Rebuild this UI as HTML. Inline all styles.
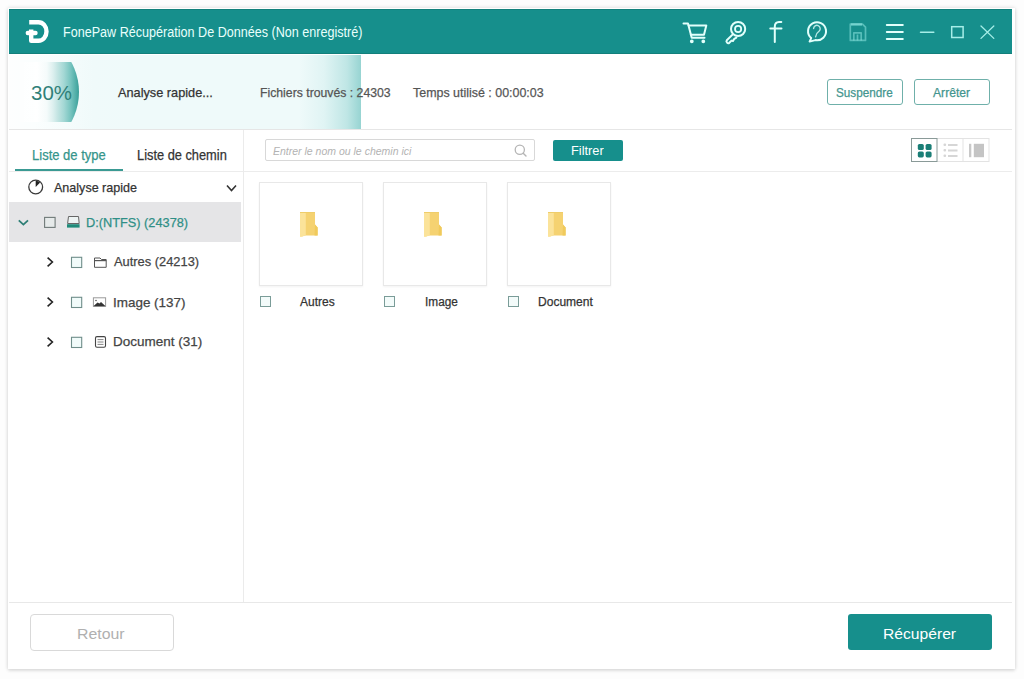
<!DOCTYPE html>
<html><head><meta charset="utf-8">
<style>
*{margin:0;padding:0;box-sizing:border-box}
html,body{width:1024px;height:679px;overflow:hidden;background:#fdfdfd;font-family:"Liberation Sans",sans-serif}
.a{position:absolute}
.t{position:absolute;white-space:pre;line-height:1;transform-origin:0 0;-webkit-text-stroke:0.25px currentColor}
#win{left:8px;top:8px;width:1007px;height:661px;background:#fff;box-shadow:0 0 4px rgba(0,0,0,.15),0 2px 3px rgba(0,0,0,.08)}
#title{left:9px;top:9px;width:1003px;height:45px;background:#168f8c;border-top:1px solid #12817c;border-bottom:1px solid #137f7b}
</style></head><body>
<div class="a" id="win"></div>
<div class="a" id="title"></div>
<div class="t" style="left:63.10px;top:25.30px;font-size:14.0px;color:#e9fffc;transform:scaleX(0.8991);-webkit-text-stroke:0">FonePaw Récupération De Données (Non enregistré)</div>


<!-- logo -->
<svg class="a" style="left:24px;top:19px" width="26" height="25" viewBox="0 0 26 25">
<path d="M5.2,3.2 H14.5 A8,9.3 0 0 1 14.5,21.8 H7.2 V10.5" fill="none" stroke="#fff" stroke-width="4.4" stroke-linejoin="round"/>
<path d="M3.8,14 H11.5" fill="none" stroke="#fff" stroke-width="4.4" stroke-linecap="round"/>
</svg>
<!-- title icons -->
<svg class="a" style="left:0;top:0" width="1024" height="60" viewBox="0 0 1024 60">
<g fill="none" stroke="#e2fffb" stroke-width="2" stroke-linecap="round" stroke-linejoin="round">
<path d="M683.5,23.6 H688 L691.7,37.7 H704.5"/>
<path d="M688.6,25.6 H706.3 L704,34.8 H690.8"/>
<circle cx="691.8" cy="41.3" r="0.9" fill="#e2fffb"/>
<circle cx="703.3" cy="41.3" r="0.9" fill="#e2fffb"/>
<circle cx="738.1" cy="29" r="7.1"/>
<circle cx="738.1" cy="29" r="3.1" stroke-width="1.8"/>
<path d="M732.5,34.6 L726.8,40.3 A1.8,1.8 0 0 0 729.3,42.8 L731.5,40.6 L733,41 L734.3,38.8 L736.4,37.6"/>
<path d="M774.8,42 V26.5 Q774.8,22 779,21.9 L781.3,22"/>
<path d="M770.3,28.6 H781.5"/>
<path d="M811.2,38.1 A9,9 0 1 1 815.4,40.1 L809.6,41.6 Z"/>
<path d="M813.6,28.6 A3.3,3.3 0 1 1 819.2,31 Q816.3,33 815.6,36.8" stroke-width="1.4" stroke-opacity="0.8"/>
<path d="M886.8,25 H902.8 M886.8,32 H902.8 M886.8,39.1 H902.8"/>
<path d="M920.5,32.3 H933.8" stroke-width="1.5" stroke="#a6eee8"/>
<rect x="951.7" y="26.7" width="11.4" height="10.8" stroke-width="1.5" stroke="#a6eee8" stroke-linejoin="miter"/>
<path d="M981,26 L993.8,38.4 M993.8,26 L981,38.4" stroke-width="1.3" stroke="#a6eee8"/>
</g>
<g fill="none" stroke="#8ee6e0" stroke-opacity="0.55" stroke-width="1.7" stroke-linejoin="round">
<path d="M850.3,24.1 H862.5 L865.5,27.1 V40.4 H850.3 Z"/>
<path d="M853.8,40.4 V32.8 H861.2 V40.4 M857.5,34.5 V40.4"/>
<path d="M851,24.5 H862" stroke-width="2.6"/>
</g>
</svg>

<!-- progress header -->
<div class="a" style="left:9px;top:55px;width:352px;height:74px;background:linear-gradient(90deg,#fdfefe 0,#fbfefe 25px,#f0fafa 85px,#effafa 120px,#effafa 290px,#e0f4f4 315px,#bfe6e5 338px,#97d4d2 352px)"></div>
<div class="a" style="left:9px;top:129px;width:1003px;height:1px;background:#e6e6e6"></div>

<div class="a" style="left:20px;top:62px;width:60px;height:60px;overflow:hidden">
<div class="a" style="left:-65px;top:-32px;width:124px;height:124px;border-radius:50%;background:linear-gradient(90deg,rgba(255,255,255,0) 45%,#fff 66%,#f5fbfb 74%,#ddf0ef 79%,#c2e4e2 83%,#a2d7d4 88%,#75c3be 93.5%,#4caba5 98%,#3a9e98 100%)"></div>
</div>
<div class="t" style="left:30.62px;top:81.55px;font-size:21.0px;color:#2f8078;transform:scaleX(0.9750);-webkit-text-stroke:0">30%</div>
<div class="t" style="left:118.00px;top:85.85px;font-size:13.0px;color:#333;transform:scaleX(0.9792)">Analyse rapide...</div>
<div class="t" style="left:260.06px;top:85.85px;font-size:13.0px;color:#555;transform:scaleX(0.9416)">Fichiers trouvés : 24303</div>
<div class="t" style="left:413.30px;top:85.85px;font-size:13.0px;color:#555;transform:scaleX(0.9566)">Temps utilisé : 00:00:03</div>
<div class="a" style="left:827px;top:79px;width:76px;height:26px;border:1px solid #6fb0aa;border-radius:3px"></div>
<div class="t" style="left:835.76px;top:86.58px;font-size:12.5px;color:#43958e;transform:scaleX(0.9373)">Suspendre</div>
<div class="a" style="left:914px;top:79px;width:76px;height:26px;border:1px solid #6fb0aa;border-radius:3px"></div>
<div class="t" style="left:933.40px;top:86.58px;font-size:12.5px;color:#43958e;transform:scaleX(0.9711)">Arrêter</div>

<!-- sidebar -->
<div class="a" style="left:243px;top:130px;width:1px;height:473px;background:#ebebeb"></div>
<div class="a" style="left:9px;top:171px;width:234px;height:1px;background:#ececec"></div>
<div class="t" style="left:31.57px;top:147.70px;font-size:14.0px;color:#35958b;transform:scaleX(0.9295)">Liste de type</div>
<div class="t" style="left:136.98px;top:147.70px;font-size:14.0px;color:#333;transform:scaleX(0.9156)">Liste de chemin</div>
<div class="a" style="left:15px;top:169px;width:108px;height:2px;background:#3a9a93"></div>
<div class="t" style="left:54.00px;top:180.53px;font-size:13.5px;color:#333;transform:scaleX(0.9292)">Analyse rapide</div>
<div class="a" style="left:9px;top:202px;width:232px;height:40px;background:#e5e5e7"></div>
<div class="t" style="left:85.85px;top:215.83px;font-size:13.5px;color:#2f8f86;transform:scaleX(0.9453)">D:(NTFS) (24378)</div>
<div class="t" style="left:114.00px;top:255.33px;font-size:13.5px;color:#444;transform:scaleX(0.9528)">Autres (24213)</div>
<div class="t" style="left:112.60px;top:295.52px;font-size:13.5px;color:#444;transform:scaleX(0.9958)">Image (137)</div>
<div class="t" style="left:112.60px;top:335.42px;font-size:13.5px;color:#444;transform:scaleX(0.9989)">Document (31)</div>


<svg class="a" style="left:0;top:170px" width="244" height="190" viewBox="0 170 244 190">
<circle cx="35.7" cy="187" r="6.9" fill="none" stroke="#3a3a3a" stroke-width="1.3"/>
<path d="M35.7,187 V180.8 A6.2,6.2 0 0 1 40.1,182.6 Z" fill="#222"/>
<path d="M227,185.5 L231.5,190.5 L236,185.5" fill="none" stroke="#333" stroke-width="1.6"/>
<path d="M18.8,220.3 L23.4,224.6 L28,220.3" fill="none" stroke="#2d7e75" stroke-width="1.8"/>
<rect x="44.6" y="217.4" width="10.5" height="10" fill="#e6eaea" stroke="#707a79" stroke-width="1.1"/>
<path d="M68.5,216.5 H78.5 L79.2,223.5 H67.6 Z" fill="#edf3f3" stroke="#666" stroke-width="1"/>
<rect x="67" y="224.2" width="12.6" height="3.4" fill="#1f8b7a"/>
<g fill="none" stroke="#222" stroke-width="1.6">
<path d="M47.6,257.6 L52.4,262 L47.6,266.4"/>
<path d="M47.6,297.6 L52.4,302 L47.6,306.4"/>
<path d="M47.6,337.6 L52.4,342 L47.6,346.4"/>
</g>
<g fill="#f1fbfa" stroke="#6f8e8a" stroke-width="1.1">
<rect x="71.5" y="257.3" width="10.2" height="10.2"/>
<rect x="71.5" y="297.3" width="10.2" height="10.2"/>
<rect x="71.5" y="337.3" width="10.2" height="10.2"/>
</g>
<path d="M94.5,258 H100 L101.5,259.5 H106.2 V267.3 H94.5 Z" fill="none" stroke="#555" stroke-width="1"/>
<path d="M94.5,260.6 H106.2" stroke="#555" stroke-width="1.2"/>
<rect x="93.4" y="297.8" width="12.2" height="8.5" fill="none" stroke="#999" stroke-width="1"/>
<path d="M93.4,306.3 L97.5,302.5 L99.5,303.5 L101,302 L105.6,306.3 Z" fill="#333"/>
<circle cx="96" cy="300.5" r="0.8" fill="#555"/>
<rect x="95.5" y="336.6" width="10" height="10.6" rx="1.5" fill="none" stroke="#444" stroke-width="1.1"/>
<path d="M97.5,339.6 H103.5 M97.5,342 H103.5 M97.5,344.4 H103.5" stroke="#777" stroke-width="0.9"/>
</svg>

<!-- toolbar -->
<div class="a" style="left:244px;top:171px;width:768px;height:1px;background:#ececec"></div>
<div class="a" style="left:265px;top:139px;width:270px;height:22px;border:1px solid #d8d8d8;border-radius:2px"></div>
<div class="t" style="left:273.00px;top:145.57px;font-size:10.5px;color:#b3b3b3;transform:scaleX(1.0000);font-style:italic;-webkit-text-stroke:0">Entrer le nom ou le chemin ici</div>
<div class="a" style="left:553px;top:140px;width:70px;height:21px;background:#168f8c;border-radius:2px"></div>
<div class="t" style="left:570.97px;top:144.78px;font-size:12.5px;color:#fff;transform:scaleX(1.0258);-webkit-text-stroke:0">Filtrer</div>


<svg class="a" style="left:500px;top:135px" width="512" height="180" viewBox="500 135 512 180">
<circle cx="519.8" cy="149.8" r="4.6" fill="none" stroke="#b5b5b5" stroke-width="1.3"/>
<path d="M523.2,153.2 L526,156" stroke="#b5b5b5" stroke-width="1.4" stroke-linecap="round"/>
<rect x="911.5" y="138.5" width="77.5" height="23" fill="#fff" stroke="#e3e3e3" stroke-width="1"/>
<path d="M963,138.5 V161.5" stroke="#e3e3e3" stroke-width="1"/>
<rect x="911.5" y="138.5" width="25.5" height="23" fill="#fff" stroke="#8a9a98" stroke-width="1"/>
<g fill="#1a7e76">
<rect x="917.8" y="144" width="6" height="6" rx="1.6"/>
<rect x="925.6" y="144" width="6" height="6" rx="1.6"/>
<rect x="917.8" y="151.4" width="6" height="6" rx="1.6"/>
<rect x="925.6" y="151.4" width="6" height="6" rx="1.6"/>
</g>
<g fill="#d6d6d6">
<rect x="943.5" y="143.5" width="2.6" height="2.6" rx="1"/>
<rect x="943.5" y="149" width="2.6" height="2.6" rx="1"/>
<rect x="943.5" y="154.5" width="2.6" height="2.6" rx="1"/>
<rect x="948" y="144" width="9.5" height="2"/>
<rect x="948" y="149.5" width="9.5" height="2"/>
<rect x="948" y="155" width="9.5" height="2"/>
<rect x="969" y="143.8" width="2.3" height="13.4" fill="#c8c8c8"/>
<rect x="973.8" y="143.8" width="10.2" height="13.4" fill="#c4c4c4"/>
</g>
</svg>

<!-- cards -->
<div class="a" style="left:259px;top:182px;width:104px;height:104px;border:1px solid #e8e8e8;box-shadow:0 1px 2px rgba(0,0,0,.05)"></div>
<svg class="a" style="left:299px;top:211px" width="20" height="27" viewBox="0 0 20 27">
<path d="M1,1 H16 V13.5 L18.6,16.5 V24.6 H6 L3,25.6 H1 Z" fill="#f5d271"/>
<path d="M1,1 H6.8 V24.6 L3,25.6 H1 Z" fill="#fbe39a"/>
<path d="M16,13.5 L18.6,16.5 V24.6 H15.5 Z" fill="#f0ca5c"/>
<path d="M1,1 H16 V2 H1 Z" fill="#efcd6a"/>
</svg>
<div class="a" style="left:260px;top:296px;width:11px;height:11px;border:1px solid #7a9c98;background:#f3fbfa"></div>
<div class="a" style="left:383px;top:182px;width:104px;height:104px;border:1px solid #e8e8e8;box-shadow:0 1px 2px rgba(0,0,0,.05)"></div>
<svg class="a" style="left:423px;top:211px" width="20" height="27" viewBox="0 0 20 27">
<path d="M1,1 H16 V13.5 L18.6,16.5 V24.6 H6 L3,25.6 H1 Z" fill="#f5d271"/>
<path d="M1,1 H6.8 V24.6 L3,25.6 H1 Z" fill="#fbe39a"/>
<path d="M16,13.5 L18.6,16.5 V24.6 H15.5 Z" fill="#f0ca5c"/>
<path d="M1,1 H16 V2 H1 Z" fill="#efcd6a"/>
</svg>
<div class="a" style="left:384px;top:296px;width:11px;height:11px;border:1px solid #7a9c98;background:#f3fbfa"></div>
<div class="a" style="left:507px;top:182px;width:104px;height:104px;border:1px solid #e8e8e8;box-shadow:0 1px 2px rgba(0,0,0,.05)"></div>
<svg class="a" style="left:547px;top:211px" width="20" height="27" viewBox="0 0 20 27">
<path d="M1,1 H16 V13.5 L18.6,16.5 V24.6 H6 L3,25.6 H1 Z" fill="#f5d271"/>
<path d="M1,1 H6.8 V24.6 L3,25.6 H1 Z" fill="#fbe39a"/>
<path d="M16,13.5 L18.6,16.5 V24.6 H15.5 Z" fill="#f0ca5c"/>
<path d="M1,1 H16 V2 H1 Z" fill="#efcd6a"/>
</svg>
<div class="a" style="left:508px;top:296px;width:11px;height:11px;border:1px solid #7a9c98;background:#f3fbfa"></div>
<div class="t" style="left:300.00px;top:295.57px;font-size:12.5px;color:#333;transform:scaleX(0.9611)">Autres</div>
<div class="t" style="left:424.75px;top:295.57px;font-size:12.5px;color:#333;transform:scaleX(0.9455)">Image</div>
<div class="t" style="left:537.94px;top:295.57px;font-size:12.5px;color:#333;transform:scaleX(0.9625)">Document</div>

<!-- footer -->
<div class="a" style="left:9px;top:602px;width:1003px;height:1px;background:#e8e8e8"></div>
<div class="a" style="left:30px;top:614px;width:144px;height:37px;border:1px solid #d9d9d9;border-radius:4px"></div>
<div class="t" style="left:77.38px;top:625.62px;font-size:15.5px;color:#b0b0b0;transform:scaleX(1.0222);-webkit-text-stroke:0">Retour</div>
<div class="a" style="left:848px;top:614px;width:144px;height:36px;background:#168f8c;border-radius:3px"></div>
<div class="t" style="left:883.49px;top:625.53px;font-size:15.5px;color:#fff;transform:scaleX(1.0099);-webkit-text-stroke:0">Récupérer</div>
</body></html>
